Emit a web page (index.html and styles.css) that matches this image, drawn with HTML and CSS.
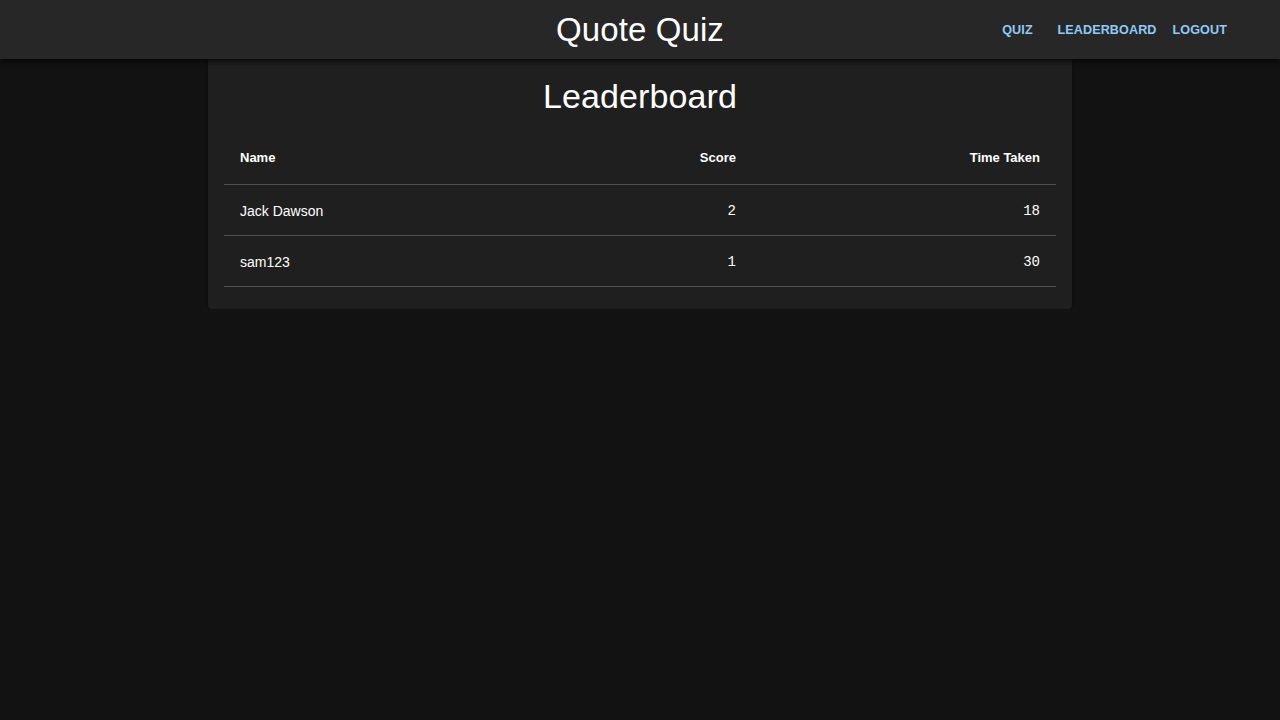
FILE: index.html
```html
<!DOCTYPE html>
<html lang="en">
<head>
<meta charset="utf-8">
<title>Quote Quiz</title>
<link rel="stylesheet" href="styles.css">
</head>
<body>
<header class="appbar">
  <div class="appbar-spacer"></div>
  <h1 class="brand">Quote Quiz</h1>
  <nav class="nav">
    <a class="nav-btn" href="#">Quiz</a>
    <a class="nav-btn" href="#">Leaderboard</a>
    <a class="nav-btn" href="#">Logout</a>
  </nav>
</header>
<main class="main">
  <section class="card">
    <h2 class="card-title">Leaderboard</h2>
    <table class="board">
      <colgroup>
        <col class="col-name">
        <col class="col-score">
        <col class="col-time">
      </colgroup>
      <thead>
        <tr>
          <th class="cell left">Name</th>
          <th class="cell right">Score</th>
          <th class="cell right">Time Taken</th>
        </tr>
      </thead>
      <tbody>
        <tr>
          <td class="cell left">Jack Dawson</td>
          <td class="cell right num">2</td>
          <td class="cell right num">18</td>
        </tr>
        <tr>
          <td class="cell left">sam123</td>
          <td class="cell right num">1</td>
          <td class="cell right num">30</td>
        </tr>
      </tbody>
    </table>
  </section>
</main>
</body>
</html>
```

FILE: styles.css
```css
* { box-sizing: border-box; }

html, body {
  margin: 0;
  padding: 0;
  background: #121212;
  color: #ffffff;
  font-family: "Liberation Sans", Arial, sans-serif;
}

.appbar {
  position: relative;
  z-index: 2;
  height: 59px;
  background: #272727;
  box-shadow: 0 2px 4px -1px rgba(0,0,0,0.5), 0 4px 5px 0 rgba(0,0,0,0.35);
  display: grid;
  grid-template-columns: 1fr auto 1fr;
  align-items: center;
  padding: 0 24px;
}

.brand {
  margin: 0;
  font-size: 33px;
  font-weight: 400;
  letter-spacing: 0.1px;
  color: #ffffff;
  line-height: 1;
}

.nav {
  display: flex;
  justify-content: flex-end;
  align-items: center;
  padding-right: 21px;
}

.nav-btn {
  min-width: 64px;
  padding: 6px 8px;
  text-align: center;
  font-size: 12.6px;
  font-weight: 700;
  text-transform: uppercase;
  letter-spacing: 0.1px;
  color: #90caf9;
  text-decoration: none;
}

.main {
  display: flex;
  justify-content: center;
}

.card {
  width: 864px;
  background: #1f1f1f;
  border-radius: 0 0 4px 4px;
  box-shadow: 0 2px 3px rgba(0,0,0,0.35);
  padding: 16px 16px 22px;
}

.card-title {
  margin: 0 0 16px;
  text-align: center;
  font-size: 34px;
  font-weight: 400;
  line-height: 42px;
  letter-spacing: 0.1px;
}

.board {
  width: 100%;
  border-collapse: collapse;
  table-layout: fixed;
}

.col-name { width: 264px; }
.col-score { width: 264px; }
.col-time { width: auto; }

.cell {
  padding: 17px 16px 15px;
  height: 51px;
  border-bottom: 1px solid #515151;
  font-size: 14px;
  line-height: 18px;
  color: #ffffff;
}

th.cell {
  font-size: 13px;
  font-weight: 700;
  padding: 16px;
}

.left { text-align: left; }
.right { text-align: right; }

.num {
  font-family: "Liberation Mono", "DejaVu Sans Mono", monospace;
  font-size: 14px;
}
```
